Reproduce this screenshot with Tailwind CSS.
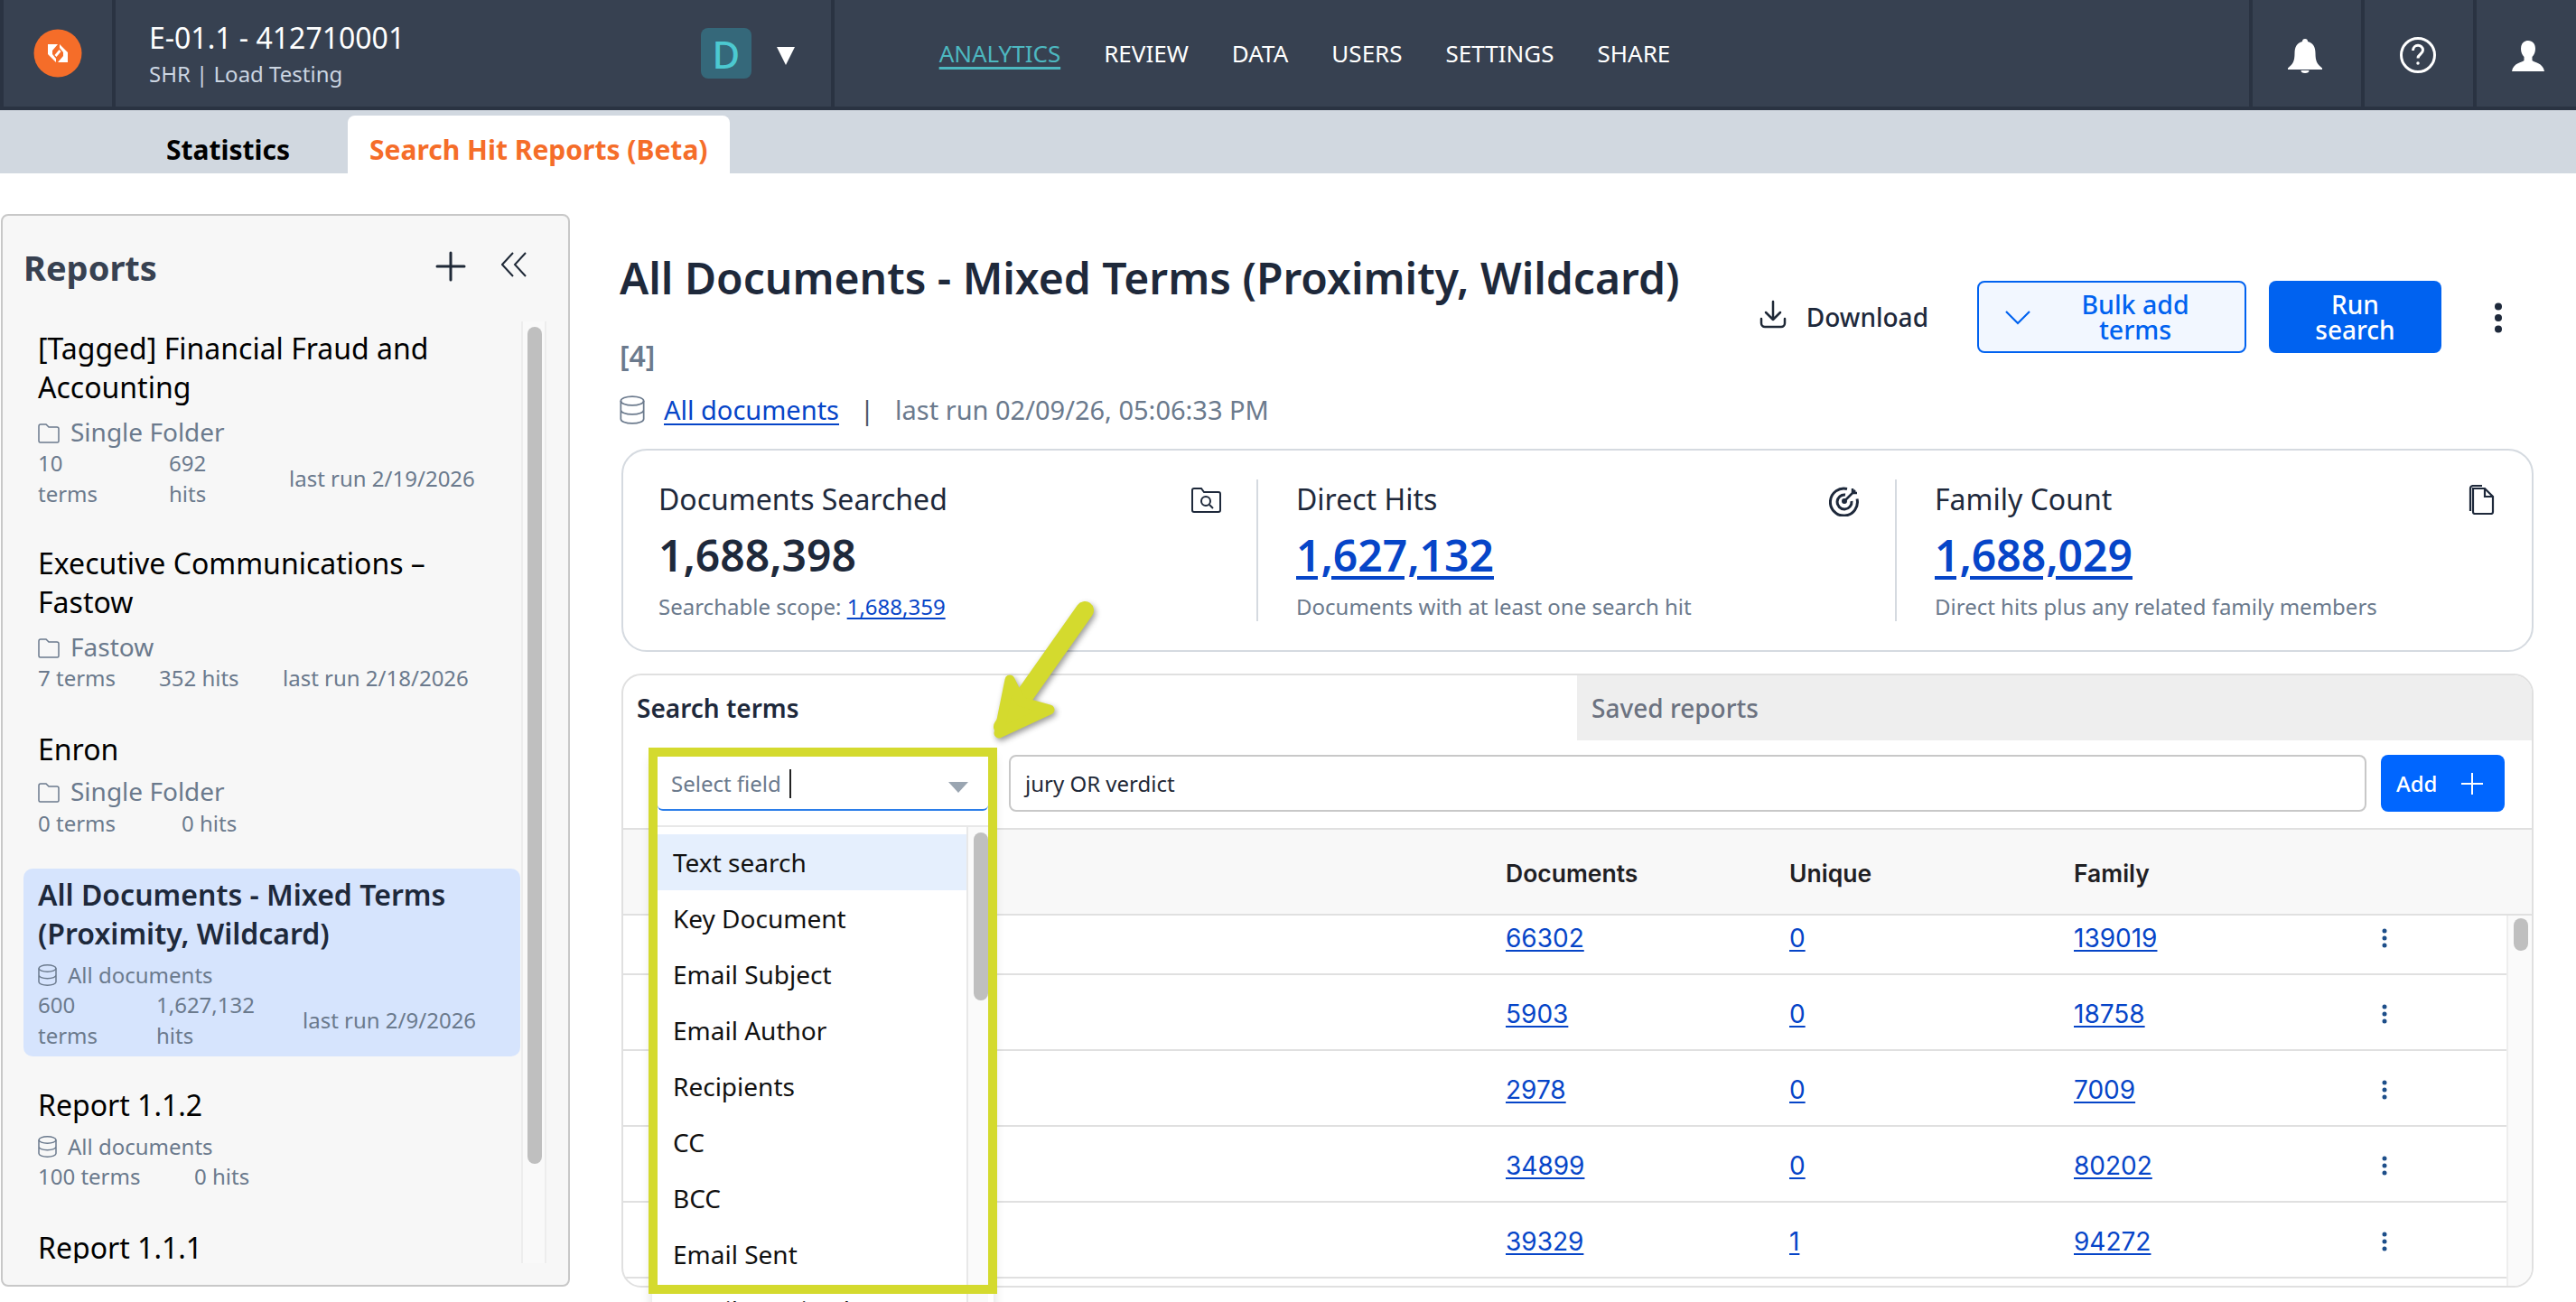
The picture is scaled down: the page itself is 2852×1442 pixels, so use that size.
<!DOCTYPE html>
<html><head><meta charset="utf-8">
<script src="https://cdn.jsdelivr.net/npm/@tailwindcss/browser@4"></script>
</head>
<body class="relative w-[2852px] h-[1442px] overflow-hidden bg-white font-['Noto_Sans',sans-serif]">
<!-- header -->
<header class="flex h-[122px] bg-[#374151] border-b-[4px] border-[#2a3342] text-white">
  <div class="w-[128px] h-full flex items-center justify-center border-l-[4px] border-r-[4px] border-[#2a3342]">
    <svg width="54" height="54" viewBox="0 0 54 54"><circle cx="27" cy="27" r="26.5" fill="#f56d29"/><g transform="translate(16 16)" fill="#fff"><path d="M0 1H11L5 8V12L9 17V21L0 12Z"/><path d="M0 1H11L5 8V12L9 17V21L0 12Z" transform="rotate(180 11 11)"/><path d="M12.500 7 14.500 9 9.500 15 7.500 13Z"/></g></svg>
  </div>
  <div class="w-[796px] h-full flex items-center border-r-[4px] border-[#2a3342] pl-[37px]">
    <div class="w-[611px] pt-[2px]">
      <div class="text-[32px] leading-[43px]">E-01.1 - 412710001</div>
      <div class="text-[24px] leading-[37px] text-[#cbd5e1]">SHR | Load Testing</div>
    </div>
    <div class="w-[56px] h-[56px] rounded-[8px] bg-[#35687a] text-[#4cc9d1] text-[42px] font-medium flex items-center justify-center">D</div>
    <svg class="ml-[28px] mt-[6px]" width="20" height="20" viewBox="0 0 20 20"><path d="M0 0h20L10 20z" fill="#fff"/></svg>
  </div>
  <nav class="flex gap-[48px] pl-[116px] w-[1567px] items-center text-[26px] h-full">
    <a class="text-[#4db8c0] underline underline-offset-[5px] decoration-[3px]">ANALYTICS</a>
    <a>REVIEW</a><a>DATA</a><a>USERS</a><a>SETTINGS</a><a>SHARE</a>
  </nav>
  <div class="flex h-full">
    <div class="w-[124px] h-full border-l-[4px] border-[#2a3342] flex items-center justify-center pt-[6px] pr-[4px]">
      <svg width="38" height="38" viewBox="0 0 38 38"><path d="M19 0a3 3 0 0 1 3 3c6 1.500 8.500 6 8.500 13 0 9 2 12 7.500 16.500v1.500H0v-1.500C5.500 28 7.500 25 7.500 16 7.500 9 10 4.500 16 3a3 3 0 0 1 3-3zM14.500 35h9a4.500 3 0 0 1-9 0z" fill="#fff"/></svg>
    </div>
    <div class="w-[124px] h-full border-l-[4px] border-[#2a3342] flex items-center justify-center pt-[4px] pr-[2px]">
      <svg width="40" height="40" viewBox="0 0 40 40" fill="none" stroke="#fff" stroke-width="3"><circle cx="20" cy="20" r="18.500"/><path d="M14.500 15c0-7.500 11-7.500 11-.5 0 4.500-5.500 4.500-5.500 9" stroke-width="3"/><circle cx="20" cy="29" r="1" fill="#fff" stroke-width="1.500"/></svg>
    </div>
    <div class="w-[114px] h-full border-l-[4px] border-[#2a3342] flex items-center justify-center pl-[4px] pt-[6px]">
      <svg width="36" height="34" viewBox="0 0 36 34"><path d="M18 0c5 0 8 3.500 8 9 0 4-1.500 7-3.500 9v4c2 2 12 2.500 13.500 12H0c1.500-9.500 11.500-10 13.500-12v-4C11.500 16 10 13 10 9c0-5.500 3-9 8-9z" fill="#fff"/></svg>
    </div>
  </div>
</header>
<!-- tabs -->
<div class="h-[70px] bg-[#d1d8e0] flex items-end pl-[184px]">
  <div class="w-[201px] text-[30px] font-bold text-black leading-[75px] h-[64px]">Statistics</div>
  <div class="w-[423px] h-[64px] bg-white rounded-t-[8px] text-[30px] font-bold text-[#f56d29] leading-[75px] pl-[24px]">Search Hit Reports (Beta)</div>
</div>
<!-- main -->
<main class="flex pt-[45px]">
  <aside class="w-[630px] h-[1188px] ml-[1px] bg-[#f7f7f7] border-[2px] border-[#c8c8c8] rounded-[8px] flex flex-col">
    <div class="h-[117px] flex items-start pl-[23px] pr-[46px] pt-[32px] shrink-0">
      <div class="text-[38px] leading-[50px] font-bold text-[#374151] flex-1">Reports</div>
      <svg class="mt-[7px]" width="34" height="34" viewBox="0 0 34 34" fill="none" stroke="#1f2937" stroke-width="3" stroke-linecap="round"><path d="M17 2v30M2 17h30"/></svg>
      <svg class="ml-[39px] mt-[8px]" width="28" height="28" viewBox="0 0 28 28" fill="none" stroke="#1f2937" stroke-width="2"><path d="M13 1 1 14l12 13M27 1 15 14l12 13"/></svg>
    </div>
    <div class="flex flex-1 h-[1043px] overflow-hidden mb-[24px]">
      <div class="w-[550px] ml-[23px] overflow-hidden">
        <div class="px-[16px] pt-[8px] pb-[28px] text-[24px] text-[#6b7a8d]">
          <div class="text-[32px] leading-[43px] text-black">[Tagged] Financial Fraud and Accounting</div>
          <div class="flex items-center mt-[10px] h-[36px] text-[28px]"><svg class="mr-[12px] mt-[3px]" width="24" height="22" viewBox="0 0 24 22" fill="none" stroke="#6b7a8d" stroke-width="1.500"><path d="M1 19.500V3a2 2 0 0 1 2-2h6l3 3h9a2 2 0 0 1 2 2v13.500a1.500 1.500 0 0 1-1.500 1.500h-19A1.500 1.500 0 0 1 1 19.500z"/></svg>Single Folder</div>
          <div class="flex items-center leading-[34px]"><span class="w-[70px] mr-[75px]">10 terms</span><span class="w-[50px] mr-[83px]">692 hits</span><span>last run 2/19/2026</span></div>
        </div>
        <div class="px-[16px] pt-[10px] pb-[30px] text-[24px] text-[#6b7a8d]">
          <div class="text-[32px] leading-[43px] text-black">Executive Communications – Fastow</div>
          <div class="flex items-center mt-[10px] h-[36px] text-[28px]"><svg class="mr-[12px] mt-[3px]" width="24" height="22" viewBox="0 0 24 22" fill="none" stroke="#6b7a8d" stroke-width="1.500"><path d="M1 19.500V3a2 2 0 0 1 2-2h6l3 3h9a2 2 0 0 1 2 2v13.500a1.500 1.500 0 0 1-1.500 1.500h-19A1.500 1.500 0 0 1 1 19.500z"/></svg>Fastow</div>
          <div class="flex items-center leading-[34px]"><span class="w-[134px]">7 terms</span><span class="w-[137px]">352 hits</span><span>last run 2/18/2026</span></div>
        </div>
        <div class="px-[16px] pt-[10px] pb-[33px] text-[24px] text-[#6b7a8d]">
          <div class="text-[32px] leading-[43px] text-black">Enron</div>
          <div class="flex items-center mt-[7px] h-[36px] text-[28px]"><svg class="mr-[12px] mt-[3px]" width="24" height="22" viewBox="0 0 24 22" fill="none" stroke="#6b7a8d" stroke-width="1.500"><path d="M1 19.500V3a2 2 0 0 1 2-2h6l3 3h9a2 2 0 0 1 2 2v13.500a1.500 1.500 0 0 1-1.500 1.500h-19A1.500 1.500 0 0 1 1 19.500z"/></svg>Single Folder</div>
          <div class="flex items-center leading-[34px] mt-[1px]"><span class="w-[159px]">0 terms</span><span>0 hits</span></div>
        </div>
        <div class="px-[16px] pt-[7px] pb-[6px] bg-[#d6e4fd] rounded-[10px] text-[24px] text-[#6b7a8d]">
          <div class="text-[32px] leading-[43px] font-semibold text-[#1e293b]">All Documents - Mixed Terms (Proximity, Wildcard)</div>
          <div class="flex items-center mt-[8px] h-[33px] text-[24px]"><svg class="mr-[12px]" width="21" height="24" viewBox="0 0 21 24" fill="none" stroke="#6b7a8d" stroke-width="1.500"><ellipse cx="10.500" cy="4.500" rx="9.500" ry="3.700"/><path d="M1 4.500v15c0 2 4 3.700 9.500 3.700s9.500-1.700 9.500-3.700v-15M1 12c0 2 4 3.700 9.500 3.700S20 14 20 12"/></svg>All documents</div>
          <div class="flex items-center leading-[34px]"><span class="w-[70px] mr-[61px]">600 terms</span><span class="w-[110px] mr-[52px]">1,627,132 hits</span><span>last run 2/9/2026</span></div>
        </div>
        <div class="px-[16px] pt-[32px] pb-[30px] text-[24px] text-[#6b7a8d]">
          <div class="text-[32px] leading-[43px] text-black">Report 1.1.2</div>
          <div class="flex items-center mt-[8px] h-[33px] text-[24px]"><svg class="mr-[12px]" width="21" height="24" viewBox="0 0 21 24" fill="none" stroke="#6b7a8d" stroke-width="1.500"><ellipse cx="10.500" cy="4.500" rx="9.500" ry="3.700"/><path d="M1 4.500v15c0 2 4 3.700 9.500 3.700s9.500-1.700 9.500-3.700v-15M1 12c0 2 4 3.700 9.500 3.700S20 14 20 12"/></svg>All documents</div>
          <div class="flex items-center leading-[34px]"><span class="w-[173px]">100 terms</span><span>0 hits</span></div>
        </div>
        <div class="px-[16px] pt-[10px] text-[32px] leading-[43px] text-black">Report 1.1.1</div>
      </div>
      <div class="w-[28px] ml-[1px] bg-[#f9f9f9] border-x-[2px] border-[#ededed] pt-[6px] pl-[5px]">
        <div class="w-[16px] h-[927px] rounded-full bg-[#bfbfbf]"></div>
      </div>
    </div>
  </aside>
  <section class="ml-[55px] w-[2119px]">
    <div class="w-full flex justify-between h-[261px]">
      <div>
        <h1 class="text-[48px] leading-[66px] font-semibold text-[#1e293b] mt-[38px]">All Documents - Mixed Terms (Proximity, Wildcard)</h1>
        <div class="text-[32px] leading-[44px] font-semibold text-[#6b7a8d] mt-[31px]">[4]</div>
        <div class="flex items-center mt-[19px] text-[29px] leading-[38px] text-[#6b7a8d]">
          <svg class="mr-[21px]" width="28" height="32" viewBox="0 0 21 24" fill="none" stroke="#6b7a8d" stroke-width="1.300"><ellipse cx="10.500" cy="4.500" rx="9.500" ry="3.700"/><path d="M1 4.500v15c0 2 4 3.700 9.500 3.700s9.500-1.700 9.500-3.700v-15M1 12c0 2 4 3.700 9.500 3.700S20 14 20 12"/></svg>
          <a class="text-[#0645c8] underline underline-offset-[4px]">All documents</a><span class="ml-[23px] mr-[23px] text-[#4b5563]">|</span><span>last run 02/09/26, 05:06:33 PM</span>
        </div>
      </div>
      <div class="flex items-start pt-[74px] pr-[34px]">
        <div class="flex items-center h-[80px] mr-[54px]">
          <svg class="mr-[22px] mt-[-6px]" width="30" height="32" viewBox="0 0 30 32" fill="none" stroke="#1f2937" stroke-width="2.500" stroke-linecap="round" stroke-linejoin="round"><path d="M15 2v20M7 14l8 8 8-8M2 21v5a4 4 0 0 0 4 4h18a4 4 0 0 0 4-4v-5"/></svg>
          <span class="text-[28px] text-[#1e293b] font-medium">Download</span>
        </div>
        <div class="w-[298px] h-[80px] bg-[#f2f7ff] border-[2px] border-[#0062f0] rounded-[8px] flex items-center pl-[28px]">
          <svg width="30" height="18" viewBox="0 0 30 18" fill="none" stroke="#0062f0" stroke-width="2.200"><path d="M2 3l13 13L28 3"/></svg>
          <span class="w-[182px] ml-[24px] text-center text-[28.500px] leading-[28px] text-[#0062f0] font-medium">Bulk add terms</span>
        </div>
        <div class="w-[191px] h-[80px] ml-[25px] bg-[#0062f0] rounded-[8px] flex items-center justify-center text-center text-[28px] leading-[28px] text-white font-medium px-[40px]">Run search</div>
        <svg class="ml-[58px] mt-[24px]" width="10" height="34" viewBox="0 0 10 34" fill="#1e293b"><circle cx="5" cy="4.500" r="4"/><circle cx="5" cy="17" r="4"/><circle cx="5" cy="29.500" r="4"/></svg>
      </div>
    </div>
    <!-- stats -->
    <div class="w-[2117px] ml-[2px] h-[225px] border-[2px] border-[#d5dae0] rounded-[28px] flex items-center -translate-y-[1px]">
      <div class="w-[703px] h-[157px] pl-[39px] pr-[39px] border-r-[2px] border-[#d5dae0] relative">
        <div class="text-[32px] leading-[44px] text-[#1e293b]">Documents Searched</div>
        <div class="text-[48px] leading-[66px] font-semibold text-[#1e293b] mt-[7px]">1,688,398</div>
        <div class="text-[24px] leading-[32px] text-[#6b7a8d] mt-[8px]">Searchable scope: <a class="text-[#0645c8] underline underline-offset-[3px]">1,688,359</a></div>
        <svg class="absolute right-[39px] top-[9px]" width="33" height="28" viewBox="0 0 33 28" fill="none" stroke="#1e293b" stroke-width="2"><path d="M1 25V3a2 2 0 0 1 2-2h8l3 4h16a2 2 0 0 1 2 2v18a2 2 0 0 1-2 2H3a2 2 0 0 1-2-2z"/><circle cx="16" cy="15" r="5"/><path d="M20 19l4 4"/></svg>
      </div>
      <div class="w-[707px] h-[157px] pl-[42px] pr-[39px] border-r-[2px] border-[#d5dae0] relative">
        <div class="text-[32px] leading-[44px] text-[#1e293b]">Direct Hits</div>
        <a class="block text-[48px] leading-[66px] font-semibold text-[#0645c8] underline underline-offset-[5px] mt-[7px]">1,627,132</a>
        <div class="text-[24px] leading-[32px] text-[#6b7a8d] mt-[8px]">Documents with at least one search hit</div>
        <svg class="absolute right-[39px] top-[7px]" width="34" height="34" viewBox="0 0 34 34" fill="none" stroke="#1e293b" stroke-width="3"><path d="M20 3.500a15 15 0 1 0 11 11"/><path d="M18 10a8 8 0 1 0 7 7"/><circle cx="17" cy="17" r="1.500"/><path d="M17 17 29 5M26 3v5h5" stroke-width="2.500"/></svg>
      </div>
      <div class="flex-1 h-[157px] pl-[42px] relative">
        <div class="text-[32px] leading-[44px] text-[#1e293b]">Family Count</div>
        <a class="block text-[48px] leading-[66px] font-semibold text-[#0645c8] underline underline-offset-[5px] mt-[7px]">1,688,029</a>
        <div class="text-[24px] leading-[32px] text-[#6b7a8d] mt-[8px]">Direct hits plus any related family members</div>
        <svg class="absolute right-[41px] top-[6px]" width="30" height="33" viewBox="0 0 30 33" fill="none" stroke="#1e293b" stroke-width="2.200"><path d="M3 29V4a3 3 0 0 1 3-3h10"/><path d="M6 4h13l9 9v17a2 2 0 0 1-2 2H8a2 2 0 0 1-2-2z"/><path d="M19 4v9h9"/></svg>
      </div>
    </div>
    <!-- panel -->
    <div class="w-[2117px] ml-[2px] h-[680px] mt-[24px] border-[2px] border-[#e0e0e0] rounded-[22px] overflow-hidden -translate-y-[1px]">
      <div class="flex h-[72px]">
        <div class="w-[1056px] pl-[15px] text-[28px] leading-[72px] font-semibold text-[#1e293b]">Search terms</div>
        <div class="flex-1 bg-[#eeeeee] pl-[16px] text-[28px] leading-[72px] font-medium text-[#6b7280]">Saved reports</div>
      </div>
      <div class="h-[97px] flex pt-[16px] pl-[427px]">
        <div class="w-[1503px] h-[63px] border-[2px] border-[#c8c8c8] rounded-[8px] pl-[16px] text-[24px] leading-[59px] text-[#1f2937]">jury OR verdict</div>
        <div class="w-[137px] h-[63px] ml-[16px] bg-[#0066ff] rounded-[8px] flex items-center pl-[17px] text-[24px] text-white font-medium">Add<svg class="ml-[26px]" width="26" height="26" viewBox="0 0 26 26" stroke="#fff" stroke-width="2"><path d="M13 1v24M1 13h24"/></svg></div>
      </div>
      <div class="h-[97px] bg-[#f8f8f8] border-y-[2px] border-[#e0e0e0] flex items-center pt-[4px] font-['Inter',sans-serif] font-semibold text-[26.500px] text-[#1f2024]">
        <div class="w-[977px]"></div><div class="w-[314px]">Documents</div><div class="w-[315px]">Unique</div><div>Family</div>
      </div>
      <div class="flex h-[420px]">
        <div class="w-[2085px] font-['Inter',sans-serif] text-[28px] text-[#0645c8]">
          <div class="flex items-center h-[66px] pb-[14px] border-b-[2px] border-[#e0e0e0]"><div class="w-[977px]"></div><a class="w-[314px] underline underline-offset-[3px]">66302</a><a class="w-[315px] underline underline-offset-[3px]">0</a><a class="w-[340px] underline underline-offset-[3px]">139019</a><svg width="8" height="22" viewBox="0 0 8 22" fill="#1d4e89"><circle cx="4" cy="3" r="2.500"/><circle cx="4" cy="11" r="2.500"/><circle cx="4" cy="19" r="2.500"/></svg></div>
          <div class="flex items-center h-[84px] pt-[3px] border-b-[2px] border-[#e0e0e0]"><div class="w-[977px]"></div><a class="w-[314px] underline underline-offset-[3px]">5903</a><a class="w-[315px] underline underline-offset-[3px]">0</a><a class="w-[340px] underline underline-offset-[3px]">18758</a><svg width="8" height="22" viewBox="0 0 8 22" fill="#1d4e89"><circle cx="4" cy="3" r="2.500"/><circle cx="4" cy="11" r="2.500"/><circle cx="4" cy="19" r="2.500"/></svg></div>
          <div class="flex items-center h-[84px] pt-[3px] border-b-[2px] border-[#e0e0e0]"><div class="w-[977px]"></div><a class="w-[314px] underline underline-offset-[3px]">2978</a><a class="w-[315px] underline underline-offset-[3px]">0</a><a class="w-[340px] underline underline-offset-[3px]">7009</a><svg width="8" height="22" viewBox="0 0 8 22" fill="#1d4e89"><circle cx="4" cy="3" r="2.500"/><circle cx="4" cy="11" r="2.500"/><circle cx="4" cy="19" r="2.500"/></svg></div>
          <div class="flex items-center h-[84px] pt-[3px] border-b-[2px] border-[#e0e0e0]"><div class="w-[977px]"></div><a class="w-[314px] underline underline-offset-[3px]">34899</a><a class="w-[315px] underline underline-offset-[3px]">0</a><a class="w-[340px] underline underline-offset-[3px]">80202</a><svg width="8" height="22" viewBox="0 0 8 22" fill="#1d4e89"><circle cx="4" cy="3" r="2.500"/><circle cx="4" cy="11" r="2.500"/><circle cx="4" cy="19" r="2.500"/></svg></div>
          <div class="flex items-center h-[84px] pt-[3px] border-b-[2px] border-[#e0e0e0]"><div class="w-[977px]"></div><a class="w-[314px] underline underline-offset-[3px]">39329</a><a class="w-[315px] underline underline-offset-[3px]">1</a><a class="w-[340px] underline underline-offset-[3px]">94272</a><svg width="8" height="22" viewBox="0 0 8 22" fill="#1d4e89"><circle cx="4" cy="3" r="2.500"/><circle cx="4" cy="11" r="2.500"/><circle cx="4" cy="19" r="2.500"/></svg></div>
        </div>
        <div class="flex-1 bg-[#fafafa] border-l-[2px] border-[#eeeeee] pl-[6px] pt-[3px]"><div class="w-[16px] h-[36px] rounded-full bg-[#bfbfbf]"></div></div>
      </div>
    </div>
  </section>
</main>
<!-- dropdown overlay -->
<div class="absolute left-[722px] top-[837px] w-[378px] h-[640px] bg-white shadow-[0_2px_12px_rgba(0,0,0,0.15)] text-[#111]">
  <div class="mx-[6px] h-[61px] pt-[2px] border-b-[2px] border-[#2b7de9] rounded-b-[6px] flex items-center pl-[15px] text-[24px] text-[#6b7a8d] relative">Select field<span class="ml-[9px] w-[2px] h-[32px] bg-[#222]"></span>
    <svg class="absolute left-[322px] top-[29px]" width="22" height="12" viewBox="0 0 22 12"><path d="M0 0h22L11 12z" fill="#9aa5b1"/></svg>
  </div>
  <div class="flex mx-[6px] mt-[16px] h-[560px] border-t-[2px] border-[#e8e8e8]">
    <div class="w-[344px] pt-[8px] text-[28px] leading-[62px] border-r-[2px] border-[#e8e8e8]">
      <div class="pl-[17px] bg-[#e5effd]">Text search</div>
      <div class="pl-[17px]">Key Document</div>
      <div class="pl-[17px]">Email Subject</div>
      <div class="pl-[17px]">Email Author</div>
      <div class="pl-[17px]">Recipients</div>
      <div class="pl-[17px]">CC</div>
      <div class="pl-[17px]">BCC</div>
      <div class="pl-[17px]">Email Sent</div>
      <div class="pl-[17px]">Email Received</div>
    </div>
    <div class="flex-1 bg-[#fafafa] pl-[6px] pt-[6px]"><div class="w-[16px] h-[186px] rounded-full bg-[#bfbfbf]"></div></div>
  </div>
</div>
<!-- annotation box -->
<div class="absolute left-[718px] top-[828px] w-[386px] h-[605px] border-[10px] border-[#d4da2e]"></div>
<!-- arrow -->
<svg class="absolute left-[1090px] top-[655px] drop-shadow-[2px_3px_3px_rgba(0,0,0,0.4)]" width="130" height="175" viewBox="0 0 130 175"><path d="M111 21 20 150" stroke="#d4da2e" stroke-width="20" stroke-linecap="round" fill="none"/><path d="M28 98 16 157 72 131 40 122z" fill="#d4da2e" stroke="#d4da2e" stroke-width="11" stroke-linejoin="round"/></svg>
</body></html>
